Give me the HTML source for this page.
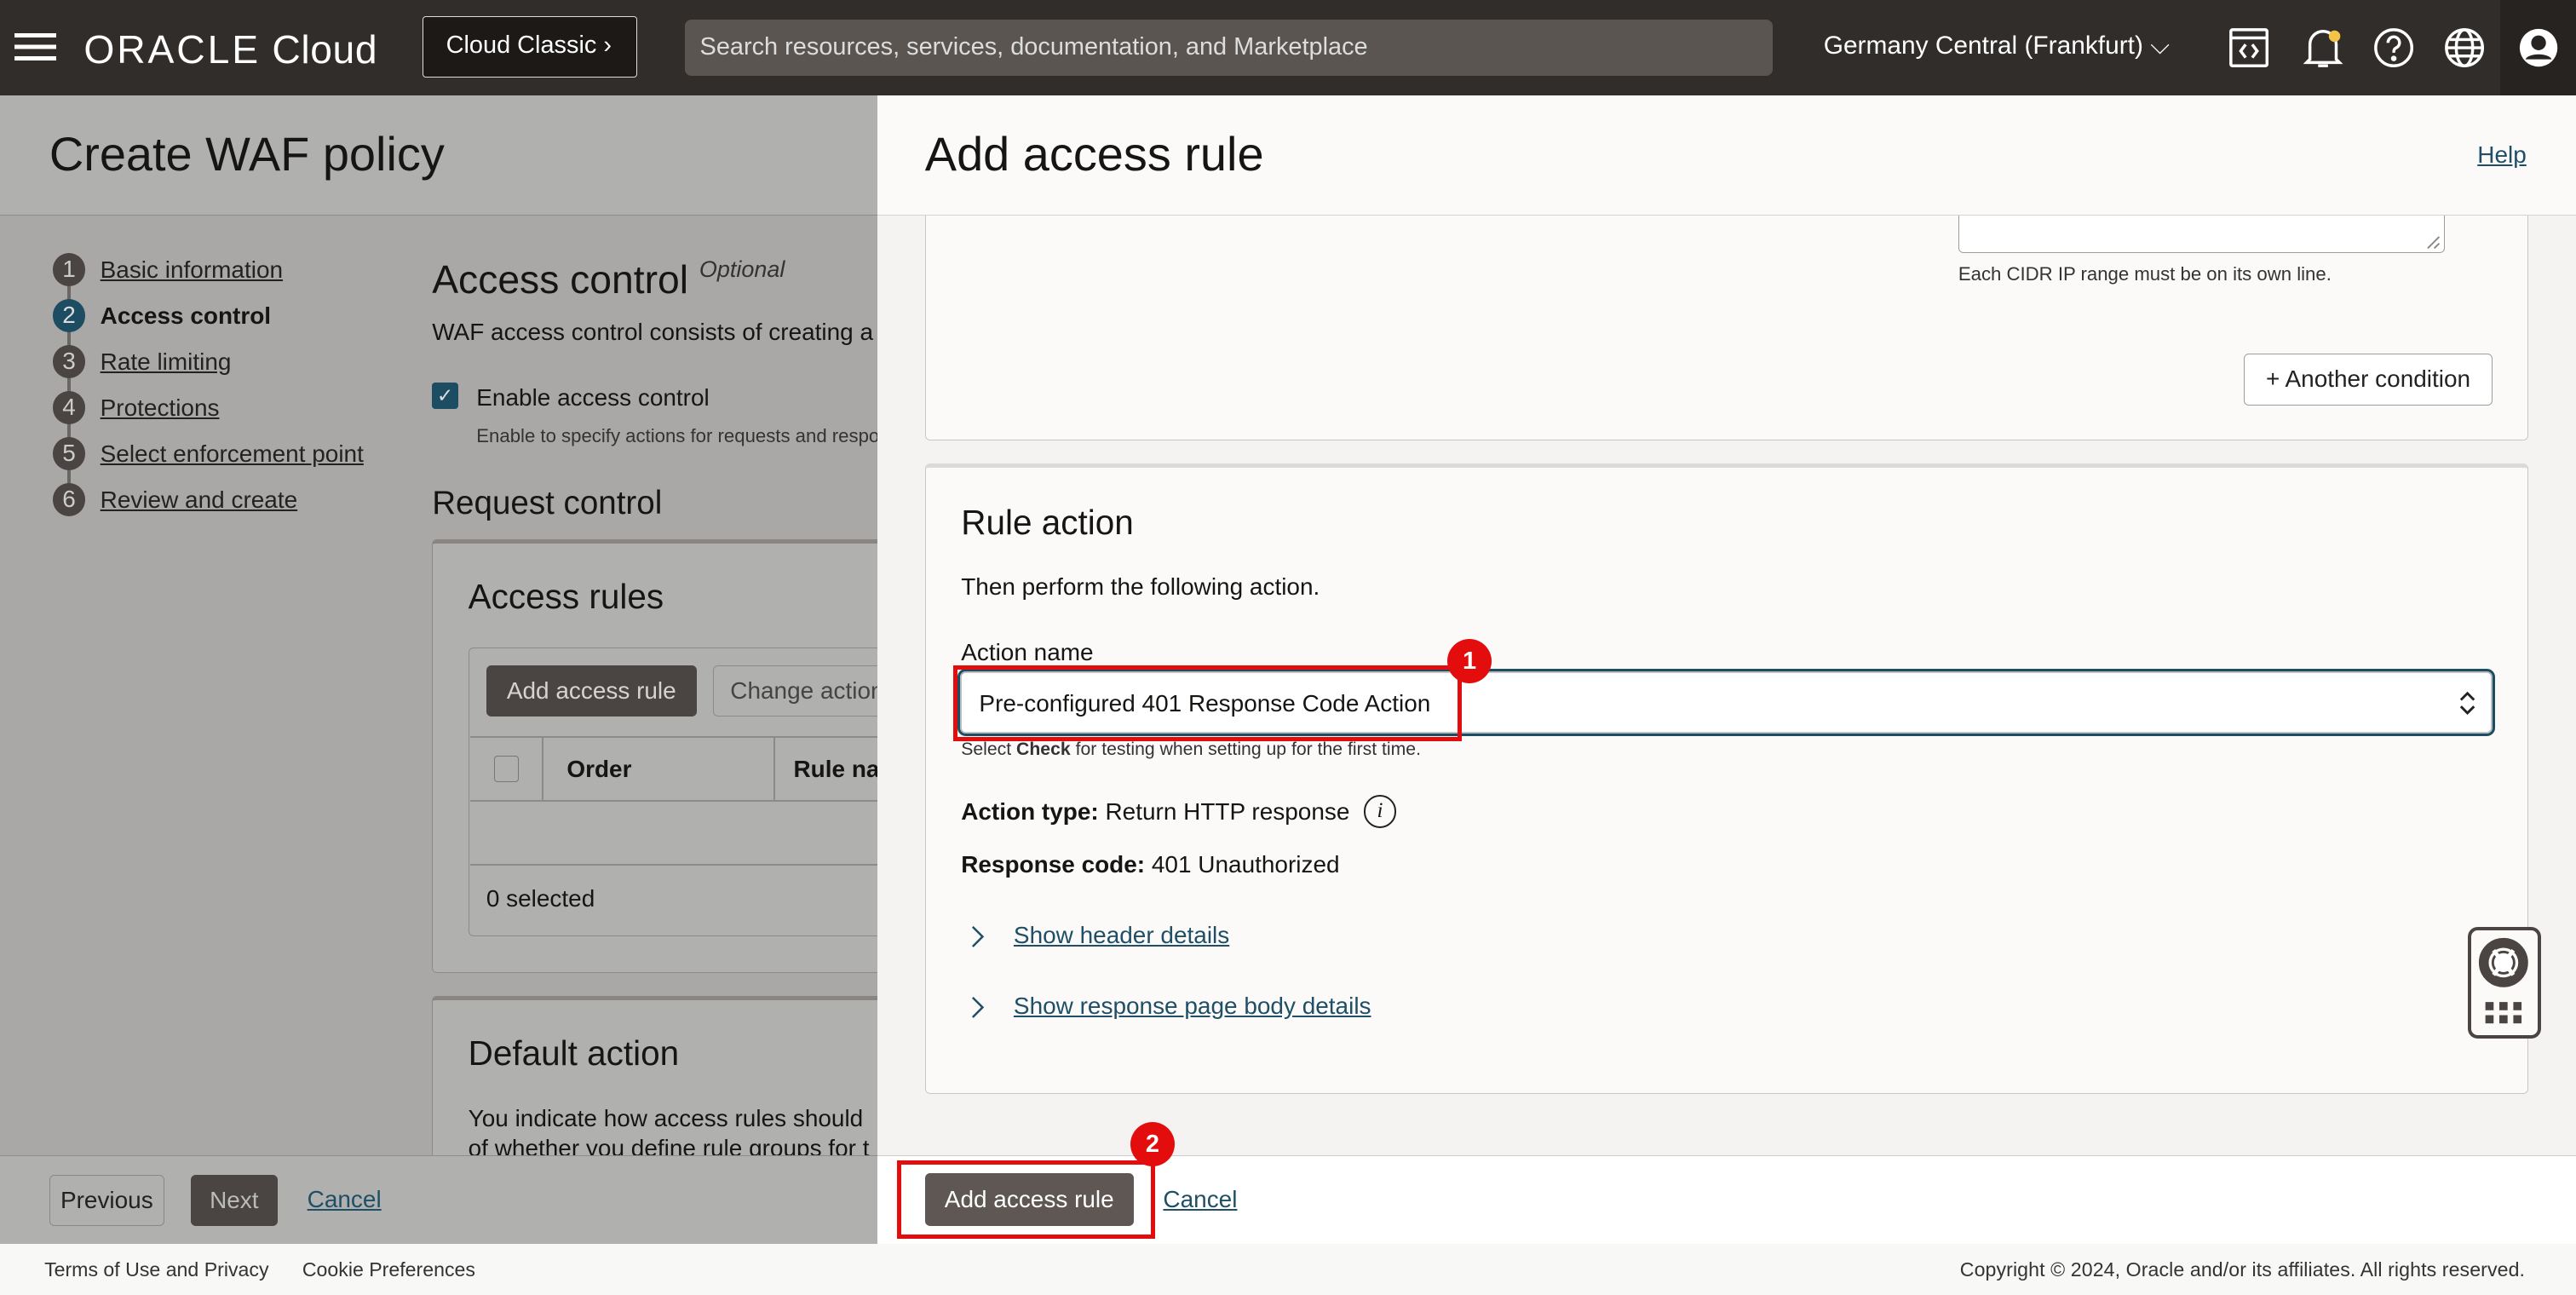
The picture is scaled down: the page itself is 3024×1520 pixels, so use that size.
<!DOCTYPE html>
<html><head><meta charset="utf-8">
<style>
*{box-sizing:border-box;margin:0;padding:0}
html,body{width:3024px;height:1520px;overflow:hidden;background:#fbfbfa}
#w{zoom:1.92857;width:1568px;height:788px;position:relative;font-family:"Liberation Sans",sans-serif;color:#161513;overflow:hidden}
.a{position:absolute;white-space:nowrap}
.lk{color:#1e4f66;text-decoration:underline}
.lkd{color:#222;text-decoration:underline}
.btn{position:absolute;border-radius:3px;font-size:14.5px;display:flex;align-items:center;justify-content:center}
</style></head><body><div id="w">
<!-- top bar -->
<div class="a" style="left:0;top:0;width:1568px;height:58px;background:#312d2a"></div>
<div class="a" style="left:1522px;top:0;width:46px;height:58px;background:#272320"></div>
<div class="a" style="left:9px;top:20px;width:25px;height:3px;background:#fff;box-shadow:0 7px 0 #fff,0 14px 0 #fff"></div>
<div class="a" style="left:51px;top:16px;font-size:24px;color:#fff;letter-spacing:0.3px"><span style="letter-spacing:1.5px">ORACLE</span> Cloud</div>
<div class="a" style="left:257px;top:10px;width:131px;height:37px;border:1px solid #ddd;border-radius:2px;background:#1c1917;color:#fff;font-size:15px;line-height:35px;padding-left:14px">Cloud Classic ›</div>
<div class="a" style="left:417px;top:12px;width:662px;height:34px;background:#5a5551;border-radius:4px;color:#ddd;font-size:15px;line-height:34px;padding-left:9px">Search resources, services, documentation, and Marketplace</div>
<div class="a" style="left:1110px;top:19px;color:#fff;font-size:15.5px">Germany Central (Frankfurt) ⌵</div>
<svg class="a" style="left:1356px;top:16px" width="26" height="26" viewBox="0 0 26 26" fill="none" stroke="#fff" stroke-width="1.8"><rect x="2" y="2" width="22" height="22" rx="1"/><path d="M2 7h22M11 11l-3 4 3 4M15 11l3 4-3 4"/></svg>
<svg class="a" style="left:1401px;top:15px" width="26" height="28" viewBox="0 0 26 28" fill="none" stroke="#fff" stroke-width="1.8"><path d="M5 21V12a8 8 0 0 1 16 0v9l2 2H3zM10 25h6"/><circle cx="20" cy="7" r="3.5" fill="#f5c24a" stroke="none"/></svg>
<svg class="a" style="left:1444px;top:16px" width="26" height="26" viewBox="0 0 26 26" fill="none" stroke="#fff" stroke-width="1.8"><circle cx="13" cy="13" r="11"/><path d="M9.5 10a3.5 3.5 0 1 1 5 3c-1.5.8-1.5 1.8-1.5 3"/><circle cx="13" cy="19.5" r=".8" fill="#fff"/></svg>
<svg class="a" style="left:1487px;top:16px" width="26" height="26" viewBox="0 0 26 26" fill="none" stroke="#fff" stroke-width="1.8"><circle cx="13" cy="13" r="11"/><ellipse cx="13" cy="13" rx="5" ry="11"/><path d="M2 13h22M4 8h18M4 18h18"/></svg>
<svg class="a" style="left:1532px;top:16px" width="26" height="26" viewBox="0 0 26 26"><circle cx="13" cy="13" r="11.5" fill="#fff"/><circle cx="13" cy="10" r="4.5" fill="#272320"/><path d="M5 20c2-4 14-4 16 0" fill="#272320"/></svg>

<!-- left dimmed page -->
<div class="a" style="left:0;top:58px;width:534px;height:73px;background:#b0b0af;border-bottom:1px solid #8e8d8b"></div>
<div class="a" style="left:0;top:131px;width:534px;height:572px;background:#a9a8a6"></div>
<div class="a" style="left:30px;top:77px;font-size:29px">Create WAF policy</div>
<div class="a" style="left:41px;top:163px;width:2px;height:140px;background:#6a6663"></div>
<div style="font-size:14.5px">
<div class="a" style="left:32px;top:154px;width:20px;height:20px;border-radius:50%;background:#4a4542;color:#ccc;text-align:center;line-height:20px">1</div><div class="a lkd" style="left:61px;top:156px">Basic information</div>
<div class="a" style="left:32px;top:182px;width:20px;height:20px;border-radius:50%;background:#1c4d63;color:#ddd;text-align:center;line-height:20px">2</div><div class="a" style="left:61px;top:184px;font-weight:bold">Access control</div>
<div class="a" style="left:32px;top:210px;width:20px;height:20px;border-radius:50%;background:#4a4542;color:#ccc;text-align:center;line-height:20px">3</div><div class="a lkd" style="left:61px;top:212px">Rate limiting</div>
<div class="a" style="left:32px;top:238px;width:20px;height:20px;border-radius:50%;background:#4a4542;color:#ccc;text-align:center;line-height:20px">4</div><div class="a lkd" style="left:61px;top:240px">Protections</div>
<div class="a" style="left:32px;top:266px;width:20px;height:20px;border-radius:50%;background:#4a4542;color:#ccc;text-align:center;line-height:20px">5</div><div class="a lkd" style="left:61px;top:268px">Select enforcement point</div>
<div class="a" style="left:32px;top:294px;width:20px;height:20px;border-radius:50%;background:#4a4542;color:#ccc;text-align:center;line-height:20px">6</div><div class="a lkd" style="left:61px;top:296px">Review and create</div>
</div>
<div class="a" style="left:263px;top:156px;font-size:24px">Access control <i style="font-size:14px;vertical-align:top;color:#333">Optional</i></div>
<div class="a" style="left:263px;top:194px;font-size:14.5px">WAF access control consists of creating a</div>
<div class="a" style="left:263px;top:233px;width:16px;height:16px;border-radius:2px;background:#1c4d63;color:#ddd;font-size:12px;text-align:center;line-height:16px">✓</div>
<div class="a" style="left:290px;top:234px;font-size:14.5px">Enable access control</div>
<div class="a" style="left:290px;top:259px;font-size:11.5px;color:#333">Enable to specify actions for requests and respo</div>
<div class="a" style="left:263px;top:295px;font-size:20px">Request control</div>
<div class="a" style="left:263px;top:328px;width:290px;height:264px;border:1px solid #8d8b89;border-top:3px solid #8a8483;border-radius:3px;background:#b0b0af"></div>
<div class="a" style="left:285px;top:351px;font-size:21px">Access rules</div>
<div class="a" style="left:285px;top:394px;width:260px;height:176px;border:1px solid #8d8b89;border-radius:3px"></div>
<div class="btn" style="left:296px;top:405px;width:128px;height:31px;background:#4a4542;color:#d6d4d2">Add access rule</div>
<div class="btn" style="left:434px;top:405px;width:110px;height:31px;border:1px solid #8d8b89;color:#444;justify-content:flex-start;padding-left:10px">Change action</div>
<div class="a" style="left:286px;top:448px;width:250px;height:1px;background:#8d8b89"></div>
<div class="a" style="left:286px;top:487px;width:250px;height:1px;background:#8d8b89"></div>
<div class="a" style="left:286px;top:526px;width:250px;height:1px;background:#8d8b89"></div>
<div class="a" style="left:330px;top:449px;width:1px;height:38px;background:#8d8b89"></div>
<div class="a" style="left:471px;top:449px;width:1px;height:38px;background:#8d8b89"></div>
<div class="a" style="left:301px;top:460px;width:15px;height:16px;border:1px solid #777;border-radius:2px"></div>
<div class="a" style="left:345px;top:460px;font-size:14.5px;font-weight:bold">Order</div>
<div class="a" style="left:483px;top:460px;font-size:14.5px;font-weight:bold">Rule na</div>
<div class="a" style="left:296px;top:539px;font-size:14.5px">0 selected</div>
<div class="a" style="left:263px;top:606px;width:290px;height:110px;border:1px solid #8d8b89;border-top:3px solid #8a8483;border-radius:3px;background:#b0b0af"></div>
<div class="a" style="left:285px;top:629px;font-size:21px">Default action</div>
<div class="a" style="left:285px;top:672px;font-size:14.5px;line-height:18px">You indicate how access rules should<br>of whether you define rule groups for t</div>
<div class="a" style="left:0;top:703px;width:534px;height:54px;background:#b0b0af;border-top:1px solid #8e8d8b"></div>
<div class="btn" style="left:30px;top:715px;width:70px;height:31px;border:1px solid #888;color:#222">Previous</div>
<div class="btn" style="left:116px;top:715px;width:53px;height:31px;background:#4a4542;color:#bbb">Next</div>
<div class="a lk" style="left:187px;top:722px;font-size:14.5px;color:#1e4f66">Cancel</div>

<!-- right panel -->
<div class="a" style="left:534px;top:58px;width:1034px;height:645px;background:#f4f3f1"></div>
<div class="a" style="left:563px;top:120px;width:976px;height:148px;background:#fbfaf9;border:1px solid #c9c7c5;border-radius:3px"></div>
<div class="a" style="left:1192px;top:120px;width:296px;height:34px;border:1px solid #9e9c9a;border-radius:3px;background:#fff"></div>
<svg class="a" style="left:1477px;top:143px" width="9" height="9" viewBox="0 0 9 9" stroke="#888" stroke-width="1"><path d="M1 8l7-7M5 8l3-3"/></svg>
<div class="a" style="left:1192px;top:160px;font-size:11.5px;color:#333">Each CIDR IP range must be on its own line.</div>
<div class="btn" style="left:1366px;top:215px;width:151px;height:32px;border:1px solid #9e9c9a;background:#fff;color:#222">+ Another condition</div>
<div class="a" style="left:534px;top:58px;width:1034px;height:73px;background:#fbfaf9;border-bottom:1px solid #d6d4d2"></div>
<div class="a" style="left:563px;top:77px;font-size:29px">Add access rule</div>
<div class="a lk" style="left:1508px;top:86px;font-size:14.5px">Help</div>
<div class="a" style="left:563px;top:282px;width:976px;height:384px;background:#fbfaf9;border:1px solid #c9c7c5;border-top:3px solid #dcdad8;border-radius:3px"></div>
<div class="a" style="left:585px;top:306px;font-size:21px">Rule action</div>
<div class="a" style="left:585px;top:349px;font-size:14.5px">Then perform the following action.</div>
<div class="a" style="left:585px;top:389px;font-size:14.5px">Action name</div>
<div class="a" style="left:583px;top:407px;width:936px;height:41px;border:2px solid #1c4d63;border-radius:5px;background:#fff;box-shadow:inset 0 0 0 1px #bbb"></div>
<div class="a" style="left:596px;top:420px;font-size:14.5px">Pre-configured 401 Response Code Action</div>
<svg class="a" style="left:1496px;top:419px" width="12" height="18" viewBox="0 0 12 18" fill="none" stroke="#222" stroke-width="1.5"><path d="M2 7l4-4 4 4M2 11l4 4 4-4"/></svg>
<div class="a" style="left:580px;top:405px;width:310px;height:46px;border:3px solid #e30d0d"></div>
<div class="a" style="left:881px;top:389px;width:27px;height:27px;border-radius:50%;background:#e30d0d;color:#fff;font-weight:bold;font-size:15px;text-align:center;line-height:27px">1</div>
<div class="a" style="left:585px;top:450px;font-size:11px;color:#333">Select <b>Check</b> for testing when setting up for the first time.</div>
<div class="a" style="left:585px;top:486px;font-size:14.5px"><b>Action type:</b> Return HTTP response</div>
<div class="a" style="left:830px;top:484px;width:20px;height:20px;border:1.5px solid #222;border-radius:50%;text-align:center;font-size:13px;font-style:italic;font-family:'Liberation Serif',serif;line-height:18px">i</div>
<div class="a" style="left:585px;top:518px;font-size:14.5px"><b>Response code:</b> 401 Unauthorized</div>
<svg class="a" style="left:590px;top:562px" width="10" height="16" viewBox="0 0 10 16" fill="none" stroke="#1e4f66" stroke-width="1.3"><path d="M2 2l6 6-6 6"/></svg>
<div class="a lk" style="left:617px;top:561px;font-size:14.5px">Show header details</div>
<svg class="a" style="left:590px;top:605px" width="10" height="16" viewBox="0 0 10 16" fill="none" stroke="#1e4f66" stroke-width="1.3"><path d="M2 2l6 6-6 6"/></svg>
<div class="a lk" style="left:617px;top:604px;font-size:14.5px">Show response page body details</div>
<!-- help widget -->
<div class="a" style="left:1502px;top:564px;width:45px;height:68px;border:2.5px solid #4a4542;border-radius:6px;background:#fbfaf9"></div>
<svg class="a" style="left:1508px;top:570px" width="32" height="58" viewBox="0 0 32 58"><circle cx="16" cy="16" r="12" fill="none" stroke="#4a4542" stroke-width="6"/><circle cx="16" cy="16" r="6.5" fill="#fff" stroke="#4a4542" stroke-width="1.5"/><path d="M10 8.5l3 4M22 8.5l-3 4M10 23.5l3-4M22 23.5l-3-4" stroke="#fff" stroke-width="2.5"/><g fill="#4a4542"><rect x="5" y="40" width="5" height="5"/><rect x="13.5" y="40" width="5" height="5"/><rect x="22" y="40" width="5" height="5"/><rect x="5" y="48" width="5" height="5"/><rect x="13.5" y="48" width="5" height="5"/><rect x="22" y="48" width="5" height="5"/></g></svg>
<!-- right bottom bar -->
<div class="a" style="left:534px;top:703px;width:1034px;height:54px;background:#fff;border-top:1px solid #ccc"></div>
<div class="btn" style="left:563px;top:714px;width:127px;height:32px;background:#5f5753;color:#fff">Add access rule</div>
<div class="a" style="left:546px;top:706px;width:157px;height:48px;border:3px solid #e30d0d"></div>
<div class="a" style="left:688px;top:683px;width:27px;height:27px;border-radius:50%;background:#e30d0d;color:#fff;font-weight:bold;font-size:15px;text-align:center;line-height:27px">2</div>
<div class="a lk" style="left:708px;top:722px;font-size:14.5px">Cancel</div>
<!-- footer -->
<div class="a" style="left:0;top:757px;width:1568px;height:31px;background:#f8f8f7"></div>
<div class="a" style="left:27px;top:766px;font-size:12px;color:#333">Terms of Use and Privacy</div>
<div class="a" style="left:184px;top:766px;font-size:12px;color:#333">Cookie Preferences</div>
<div class="a" style="left:1193px;top:766px;font-size:12px;color:#333;letter-spacing:0.05px">Copyright © 2024, Oracle and/or its affiliates. All rights reserved.</div>
</div></body></html>
